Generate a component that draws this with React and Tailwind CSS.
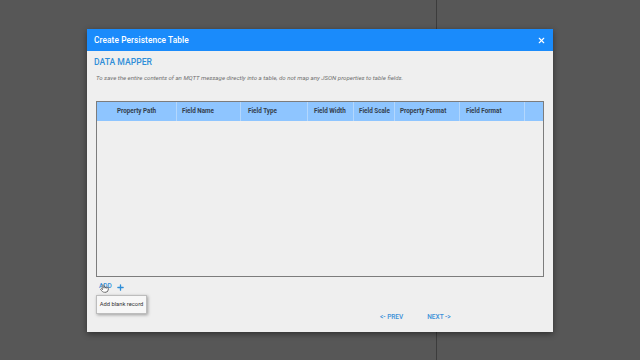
import React from 'react';
import { X, Plus, Pointer } from 'lucide-react';

const columns = [
  { label: 'Property Path', w: 'w-[80px]', cls: 'pl-[20px]' },
  { label: 'Field Name', w: 'w-[64px]', cls: 'pl-[5px]' },
  { label: 'Field Type', w: 'w-[67px]', cls: 'pl-[7px]' },
  { label: 'Field Width', w: 'w-[46px]', cls: 'pl-[6px]' },
  { label: 'Field Scale', w: 'w-[41px]', cls: 'pl-[5px]' },
  { label: 'Property Format', w: 'w-[65px]', cls: 'pl-[5px]' },
  { label: 'Field Format', w: 'w-[65px]', cls: 'pl-[6px]' },
];

export default function App() {
  return (
    <div className="relative w-[640px] h-[360px] bg-[#575757] overflow-hidden font-['Roboto','Liberation_Sans',sans-serif]">
      {/* background divider behind the dialog */}
      <div className="absolute left-[436px] top-0 w-px h-full bg-[#3c3c3c]" />

      <div className="absolute left-[87px] top-[29px] w-[466px] h-[303px] bg-[#efefef] shadow-[0_2px_6px_rgba(0,0,0,0.45)] flex flex-col">
        {/* Header */}
        <div className="h-[22px] bg-[#1a8bfb] flex items-center justify-between pl-[7px] pr-[7px] shrink-0">
          <span className="text-white text-[8.3px] font-medium tracking-[0.1px]">Create Persistence Table</span>
          <X size={9} strokeWidth={3} className="text-white" />
        </div>

        <div className="relative flex-1 flex flex-col px-[9px]">
          <h2 className="mt-[5px] -ml-[2px] text-[8.6px] leading-[12px] font-medium text-[#2f8ed8]">DATA MAPPER</h2>
          <p className="mt-[5px] text-[6.1px] leading-[9px] italic text-[#707070]">
            To save the entire contents of an MQTT message directly into a table, do not map any JSON properties to table fields.
          </p>

          {/* Table */}
          <div className="mt-[19px] h-[176px] border border-[#7c7c7c] bg-[#efefef] flex flex-col">
            <div className="h-[19px] bg-[#8ec5ff] flex shrink-0">
              {columns.map((c) => (
                <div
                  key={c.label}
                  className={`${c.w} ${c.cls} h-full border-r border-[#b3d7fd] flex items-center text-[6.3px] font-bold text-[#34404e] whitespace-nowrap`}
                >
                  {c.label}
                </div>
              ))}
              <div className="flex-1" />
            </div>
            <div className="flex-1" />
          </div>

          {/* Add */}
          <div className="mt-[5px] ml-[3px] flex items-center gap-[4px] h-[10px]">
            <span className="text-[6.5px] font-medium text-[#2f8ed8]">ADD</span>
            <Plus size={9} strokeWidth={3.5} className="text-[#2f8ed8]" />
          </div>

          {/* cursor */}
          <Pointer size={9} strokeWidth={1.6} className="absolute left-[13px] top-[233px] text-[#333] fill-white" />

          {/* tooltip */}
          <div className="absolute left-[9px] top-[244px] w-[51px] h-[19px] bg-[#f7f7f7] border border-[#bdbdbd] shadow-[1px_1px_3px_rgba(0,0,0,0.35)] flex items-center justify-center">
            <span className="text-[5.8px] text-[#333] whitespace-nowrap">Add blank record</span>
          </div>

          {/* Footer nav */}
          <div className="mt-auto mb-[9px] flex items-center pl-[284px] gap-[24px] h-[10px]">
            <span className="text-[6.5px] font-medium text-[#3b8fd8]">&lt;- PREV</span>
            <span className="text-[6.5px] font-medium text-[#3b8fd8]">NEXT -&gt;</span>
          </div>
        </div>
      </div>
    </div>
  );
}
